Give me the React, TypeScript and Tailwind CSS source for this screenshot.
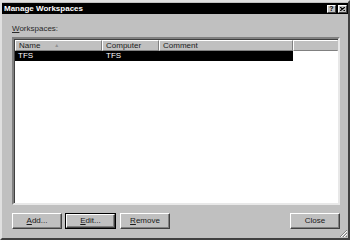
import React from "react";

const font = { fontFamily: '"Liberation Sans", Arial, sans-serif' };

const Btn: React.FC<{ label: React.ReactNode; focus?: boolean; className?: string }> = ({
  label,
  focus,
  className = "",
}) => (
  <div
    className={`${className} h-[16px] ${
      focus ? "border border-black" : ""
    } flex`}
  >
    <div className="flex-1 flex items-center justify-center border border-t-white border-l-white border-r-[#404040] border-b-[#404040] shadow-[inset_-1px_-1px_0_#808080] text-[8px] text-[#1a1a1a]">
      {label}
    </div>
  </div>
);

const HeaderCell: React.FC<{ w: string; children?: React.ReactNode }> = ({ w, children }) => (
  <div
    className={`${w} h-full flex items-center pl-[3px] border border-t-white border-l-white border-r-[#808080] border-b-[#808080] text-[8px] text-[#1a1a1a]`}
  >
    {children}
  </div>
);

export default function App() {
  return (
    <div
      style={font}
      className="w-[350px] h-[240px] bg-[#c0c0c0] relative flex flex-col border-2 border-t-[#e0e0e0] border-l-[#e0e0e0] border-r-[#404040] border-b-[#404040] select-none"
    >
      {/* title bar */}
      <div className="mx-[0px] mt-[1px] h-[11px] bg-black flex items-center justify-between pl-[2px] pr-[1px]">
        <span className="text-white font-bold text-[8px] leading-none">Manage Workspaces</span>
        <div className="flex gap-[2px]">
          <div className="w-[9px] h-[8px] bg-[#c0c0c0] border border-t-white border-l-white border-r-[#404040] border-b-[#404040] flex items-center justify-center text-[7px] font-bold leading-none text-black">
            ?
          </div>
          <div className="w-[9px] h-[8px] bg-[#c0c0c0] border border-t-white border-l-white border-r-[#404040] border-b-[#404040] flex items-center justify-center">
            <svg width="5" height="4" viewBox="0 0 5 4">
              <path d="M0 0 L5 4 M5 0 L0 4" stroke="black" strokeWidth="1.2" />
            </svg>
          </div>
        </div>
      </div>

      {/* body */}
      <div className="flex-1 flex flex-col pl-[10px] pr-[8px]">
        <div className="mt-[9px] h-[12px] text-[8px] text-[#2a2a2a] flex items-center">
          <span>
            <span className="underline">W</span>orkspaces:
          </span>
        </div>

        {/* list */}
        <div className="mt-[2px] h-[168px] border-2 border-t-[#808080] border-l-[#808080] border-r-[#e8e8e8] border-b-[#e8e8e8] shadow-[inset_1px_1px_0_#404040] bg-white flex flex-col pl-[1px] pt-[1px]">
          <div className="h-[11px] flex bg-[#c0c0c0]">
            <HeaderCell w="w-[87px]">
              <span>Name</span>
              <span className="ml-[14px] text-[5px] text-[#909090]">▲</span>
            </HeaderCell>
            <HeaderCell w="w-[57px]">Computer</HeaderCell>
            <HeaderCell w="w-[134px]">Comment</HeaderCell>
            <div className="flex-1 h-full border border-t-white border-l-white border-r-[#c0c0c0] border-b-[#808080]" />
          </div>
          <div className="h-[10px] flex text-[8px] text-white">
            <div className="w-[278px] bg-black flex items-center">
              <span className="w-[87px] pl-[3px]">TFS</span>
              <span className="pl-[4px]">TFS</span>
            </div>
          </div>
        </div>

        {/* buttons */}
        <div className="mt-[8px] flex items-center">
          <Btn className="w-[50px]" label={<span><span className="underline">A</span>dd...</span>} />
          <Btn
            className="w-[51px] ml-[3px]"
            focus
            label={<span><span className="underline">E</span>dit...</span>}
          />
          <Btn
            className="w-[50px] ml-[4px]"
            label={<span><span className="underline">R</span>emove</span>}
          />
          <div className="flex-1" />
          <Btn className="w-[50px]" label="Close" />
        </div>
      </div>

      {/* size grip */}
      <svg className="absolute right-0 bottom-0" width="10" height="10" viewBox="0 0 10 10">
        <path d="M9 2 L2 9 M9 5 L5 9 M9 8 L8 9" stroke="#808080" strokeWidth="1" />
        <path d="M9 3 L3 9 M9 6 L6 9" stroke="#ffffff" strokeWidth="1" />
      </svg>
    </div>
  );
}
